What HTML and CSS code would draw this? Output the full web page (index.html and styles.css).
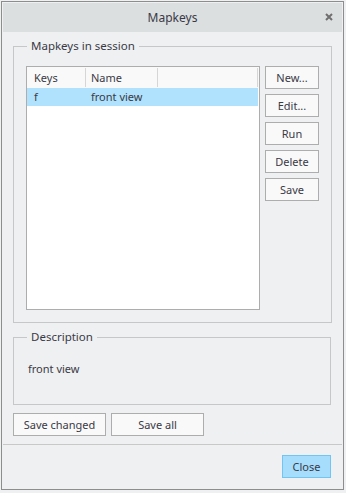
FILE: index.html
```html
<!DOCTYPE html>
<html lang="en">
<head>
  <meta charset="UTF-8" />
  <title>Mapkeys</title>
  <link rel="stylesheet" href="styles.css">
</head>
<body>
  <div class="dialog">
    <div class="titlebar">
      <span class="title">Mapkeys</span>
      <svg class="close-x" width="8" height="8" viewBox="0 0 8 8">
        <path d="M1 1 L7 7 M7 1 L1 7" stroke="#6f6f6f" stroke-width="2" />
      </svg>
    </div>

    <div class="content">
      <!-- Mapkeys in session -->
      <fieldset class="group session">
        <legend>Mapkeys in session</legend>
        <div class="session-row">
          <div class="list">
            <div class="list-head">
              <span class="col col-keys">Keys</span>
              <span class="col col-name">Name</span>
              <span class="col col-rest"></span>
            </div>
            <div class="list-row selected">
              <span class="col col-keys">f</span>
              <span class="col col-name">front view</span>
            </div>
          </div>
          <div class="side-buttons">
            <button class="btn">New...</button>
            <button class="btn">Edit...</button>
            <button class="btn">Run</button>
            <button class="btn">Delete</button>
            <button class="btn">Save</button>
          </div>
        </div>
      </fieldset>

      <!-- Description -->
      <fieldset class="group description">
        <legend>Description</legend>
        <p class="desc-text">front view</p>
      </fieldset>

      <div class="save-row">
        <button class="btn btn-wide">Save changed</button>
        <button class="btn btn-wide">Save all</button>
      </div>
    </div>

    <div class="footer">
      <button class="btn btn-close">Close</button>
    </div>
  </div>
</body>
</html>
```

FILE: styles.css
```css
* {
  box-sizing: border-box;
  margin: 0;
  padding: 0;
}

body {
  font-family: "Noto Sans", "Open Sans", sans-serif;
  font-size: 11px;
  color: #3a3a46;
  background: #eef0f1;
}

.dialog {
  margin: 1px;
  width: 343px;
  height: 489px;
  border: 1px solid #8d8d8d;
  padding: 1px;
  background: #eff0f1;
  display: flex;
  flex-direction: column;
}

.titlebar {
  height: 29px;
  background: #dcdfe0;
  display: flex;
  align-items: center;
  justify-content: center;
  position: relative;
}

.title {
  font-size: 12px;
}

.close-x {
  position: absolute;
  right: 9px;
  top: 10px;
}

.content {
  padding: 6px 11px 0 10px;
}

.group {
  border: 1px solid #c6c7c8;
  padding: 0 12px 12px 12px;
}

.group legend {
  margin-left: 1px;
  padding: 0 4px;
  font-size: 11.5px;
  line-height: 16px;
}

.session-row {
  display: flex;
  gap: 5px;
  padding-top: 12px;
}

.list {
  width: 234px;
  height: 244px;
  background: #ffffff;
  border: 1px solid #adadad;
}

.list-head,
.list-row {
  display: flex;
}

.list-head {
  height: 21px;
  background: #f9f9f9;
  align-items: center;
}

.list-head .col {
  height: 19px;
  line-height: 19px;
  border-right: 1px solid #d6d6d6;
}

.list-row {
  height: 18px;
  line-height: 18px;
}

.selected {
  background: #b0e2fd;
  margin-right: 1px;
}

.col-keys {
  width: 59px;
  padding-left: 7px;
}

.col-name {
  width: 72px;
  padding-left: 5px;
}

.col-rest {
  width: 100px;
}

.side-buttons {
  display: flex;
  flex-direction: column;
  gap: 5px;
}

.btn {
  font-family: inherit;
  font-size: 11px;
  color: #3a3a46;
  background: #f9f9f9;
  border: 1px solid #adadad;
  height: 23px;
  width: 54px;
}

.description {
  margin-top: 6px;
  height: 76px;
}

.desc-text {
  padding-top: 16px;
  padding-left: 2px;
}

.save-row {
  display: flex;
  gap: 5px;
  margin-top: 8px;
}

.btn-wide {
  width: 93px;
}

.footer {
  margin-top: 8px;
  border-top: 1px solid #c8c8c8;
  display: flex;
  justify-content: flex-end;
  padding: 10px 11px 0 0;
}

.btn-close {
  width: 49px;
  background: #a6ddfc;
  border-color: #72c4f1;
}
```
